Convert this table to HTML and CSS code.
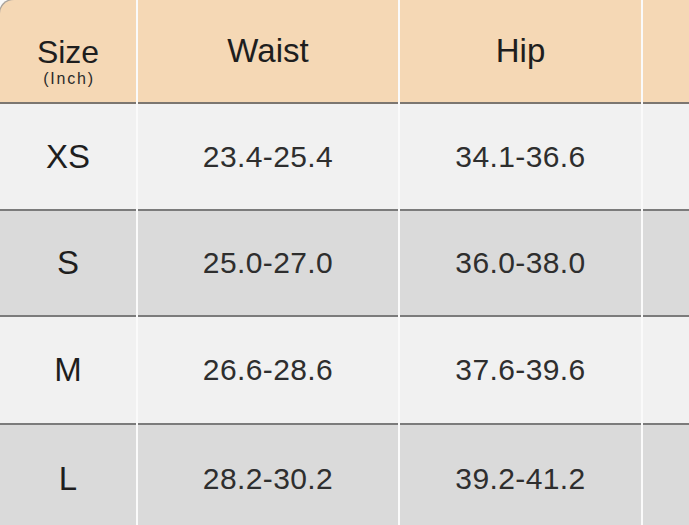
FILE: index.html
```html
<!DOCTYPE html>
<html>
<head>
<meta charset="utf-8">
<link rel="stylesheet" href="styles.css">
</head>
<body>
<div class="chart">
  <div class="cell head first"><span class="size-title">Size</span><span class="unit">(Inch)</span></div>
  <div class="cell head">Waist</div>
  <div class="cell head">Hip</div>
  <div class="cell head"></div>

  <div class="cell light size-cell">XS</div>
  <div class="cell light num">23.4-25.4</div>
  <div class="cell light num">34.1-36.6</div>
  <div class="cell light"></div>

  <div class="cell grey size-cell">S</div>
  <div class="cell grey num">25.0-27.0</div>
  <div class="cell grey num">36.0-38.0</div>
  <div class="cell grey"></div>

  <div class="cell light mid size-cell">M</div>
  <div class="cell light mid num">26.6-28.6</div>
  <div class="cell light mid num">37.6-39.6</div>
  <div class="cell light mid"></div>

  <div class="cell grey last size-cell">L</div>
  <div class="cell grey last num">28.2-30.2</div>
  <div class="cell grey last num">39.2-41.2</div>
  <div class="cell grey last"></div>
</div>
</body>
</html>
```

FILE: styles.css
```css
html, body {
  margin: 0;
  padding: 0;
  background: #ffffff;
  overflow: hidden;
}

.chart {
  display: grid;
  grid-template-columns: 136px 260px 241px 60px;
  grid-template-rows: 104px 105px 108px 106px 110px;
  column-gap: 2px;
  width: 705px;
  background: #fafafa;
  font-family: "Liberation Sans", Arial, sans-serif;
  color: #1e1e1e;
}

.cell {
  display: flex;
  align-items: center;
  justify-content: center;
  box-sizing: border-box;
}

.head {
  background: #f5d8b5;
  border-bottom: 2px solid #7c7670;
  font-size: 33px;
}

.first {
  flex-direction: column;
  justify-content: flex-start;
  padding-top: 34px;
  border-top-left-radius: 14px;
  box-shadow: -1px -1px 0 0 #a9a39c;
}

.size-title {
  font-size: 32px;
  line-height: 36px;
}

.unit {
  font-size: 16px;
  line-height: 18px;
  letter-spacing: 1.8px;
  padding-left: 2px;
  color: #2a2a2a;
}

.light {
  background: #f1f1f1;
}

.grey {
  background: #dadada;
  border-top: 2px solid #7b7b7b;
  border-bottom: 2px solid #7b7b7b;
}

.grey.last {
  border-bottom: none;
}

.size-cell {
  font-size: 33px;
}

.num {
  font-size: 30px;
  letter-spacing: 0.4px;
  color: #2e2e2e;
}
```
